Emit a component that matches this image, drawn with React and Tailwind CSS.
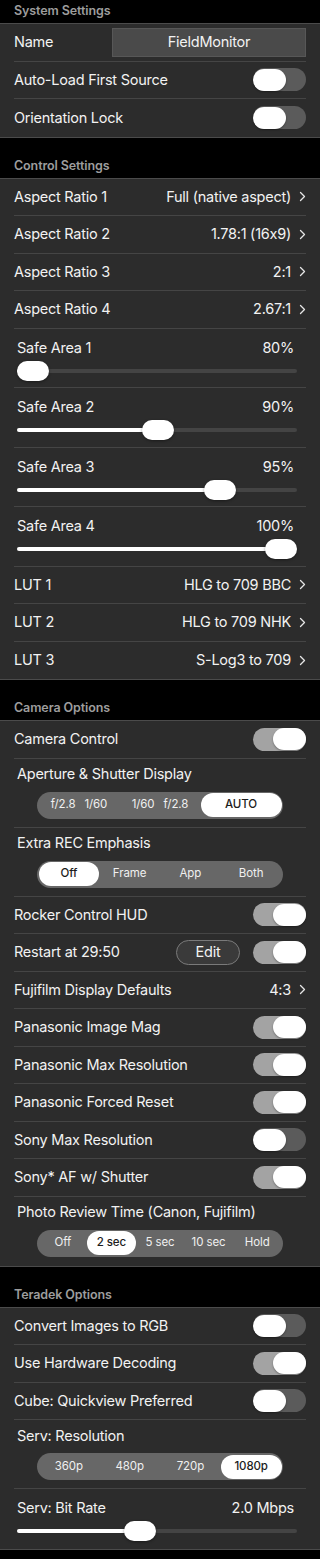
import React from 'react';

const font = { fontFamily: 'Inter, "Noto Sans", sans-serif' };

const Header = ({ title, first }) => (
  <div className={`bg-black px-[14px] ${first ? 'h-[23px]' : 'h-[40px] pt-[17px]'}`}>
    <div className="h-[23px] flex items-center text-[12.5px] font-semibold tracking-[-0.1px] text-[#9d9d9d]">{title}</div>
  </div>
);

const Section = ({ children }) => (
  <div className="bg-[#2c2c2c] border-y border-[#4b4b4b]">{children}</div>
);

const Row = ({ children, last, h = 'h-[37.5px]' }) => (
  <div className="px-[14px]">
    <div className={`${h} ${last ? '' : 'border-b border-[#454545]'}`}>{children}</div>
  </div>
);

const Toggle = ({ on }) => (
  <div className={`w-[53px] h-[23px] rounded-full flex items-center ${on ? 'bg-[#a3a3a3] justify-end' : 'bg-[#5b5b5b] justify-start'}`}>
    <div className="w-[33px] h-[22px] rounded-full bg-white shadow-[0_1px_2px_rgba(0,0,0,0.35)]" />
  </div>
);

const Chevron = () => (
  <svg width="7" height="11" viewBox="0 0 7 11" className="ml-[8px] shrink-0">
    <polyline points="1.5,1.5 5.5,5.5 1.5,9.5" fill="none" stroke="#e6e6e6" strokeWidth="1.3" strokeLinecap="round" strokeLinejoin="round" />
  </svg>
);

const txt = 'text-[14.5px] tracking-[-0.25px] text-[#f2f2f2]';

const ToggleRow = ({ label, on, last, children }) => (
  <Row last={last}>
    <div className="h-full flex items-center justify-between">
      <span className={txt}>{label}</span>
      <div className="flex items-center gap-[13px]">
        {children}
        <Toggle on={on} />
      </div>
    </div>
  </Row>
);

const NavRow = ({ label, value, last }) => (
  <Row last={last}>
    <div className="h-full flex items-center justify-between">
      <span className={txt}>{label}</span>
      <div className="flex items-center">
        <span className={txt}>{value}</span>
        <Chevron />
      </div>
    </div>
  </Row>
);

const SliderRow = ({ label, value, frac, last }) => {
  const thumbLeft = frac * 248;
  return (
    <Row last={last} h="h-[59.5px]">
      <div className="px-[3px] pt-[9px]">
        <div className="flex items-center justify-between pr-[9px] h-[20px]">
          <span className={txt}>{label}</span>
          <span className={txt}>{value}</span>
        </div>
        <div className="relative h-[20px] mt-[3px] w-[280px]">
          <div className="absolute left-0 right-0 top-[8px] h-[4px] rounded-full bg-[#444444]" />
          <div className="absolute left-0 top-[8px] h-[4px] rounded-full bg-white" style={{ width: thumbLeft + 16 }} />
          <div className="absolute top-0 w-[32px] h-[20px] rounded-full bg-white shadow-[0_1px_3px_rgba(0,0,0,0.4)]" style={{ left: thumbLeft }} />
        </div>
      </div>
    </Row>
  );
};

const SegRow = ({ label, options, selected, last }) => (
  <Row last={last} h="h-[69px]">
    <div className="px-[3px] pt-[5px]">
      <div className={`h-[21px] flex items-center ${txt}`}>{label}</div>
      <div className="mt-[7px] ml-[20px] w-[246px] h-[27px] rounded-full bg-[#676767] flex items-center p-[1.5px]">
        {options.map((o, i) => (
          <div
            key={i}
            className={`flex-1 h-full rounded-full flex items-center justify-center text-[11.5px] tracking-[-0.1px] ${i === selected ? 'bg-white text-[#1c1c1c] font-medium' : 'text-[#f0f0f0]'}`}
          >
            {o}
          </div>
        ))}
      </div>
    </div>
  </Row>
);

export default function App() {
  return (
    <div className="w-[320px] min-h-[1559px] bg-black pb-[11px] [font-feature-settings:'calt'_0]" style={font}>
      <Header title="System Settings" first />
      <Section>
        <Row>
          <div className="h-full flex items-center justify-between">
            <span className={txt}>Name</span>
            <div className={`w-[194px] h-[29px] bg-[#4a4a4a] border border-[#575757] flex items-center justify-center ${txt}`}>
              FieldMonitor
            </div>
          </div>
        </Row>
        <ToggleRow label="Auto-Load First Source" on={false} />
        <ToggleRow label="Orientation Lock" on={false} last />
      </Section>

      <Header title="Control Settings" />
      <Section>
        <NavRow label="Aspect Ratio 1" value="Full (native aspect)" />
        <NavRow label="Aspect Ratio 2" value="1.78:1 (16x9)" />
        <NavRow label="Aspect Ratio 3" value="2:1" />
        <NavRow label="Aspect Ratio 4" value="2.67:1" />
        <SliderRow label="Safe Area 1" value="80%" frac={0} />
        <SliderRow label="Safe Area 2" value="90%" frac={0.504} />
        <SliderRow label="Safe Area 3" value="95%" frac={0.754} />
        <SliderRow label="Safe Area 4" value="100%" frac={1} />
        <NavRow label="LUT 1" value="HLG to 709 BBC" />
        <NavRow label="LUT 2" value="HLG to 709 NHK" />
        <NavRow label="LUT 3" value="S-Log3 to 709" last />
      </Section>

      <Header title="Camera Options" />
      <Section>
        <ToggleRow label="Camera Control" on />
        <SegRow
          label="Aperture & Shutter Display"
          options={[
            <span key="a" className="flex gap-[9px]"><span>f/2.8</span><span>1/60</span></span>,
            <span key="b" className="flex gap-[9px]"><span>1/60</span><span>f/2.8</span></span>,
            'AUTO',
          ]}
          selected={2}
        />
        <SegRow label="Extra REC Emphasis" options={['Off', 'Frame', 'App', 'Both']} selected={0} />
        <ToggleRow label="Rocker Control HUD" on />
        <ToggleRow label="Restart at 29:50" on>
          <div className={`w-[64px] h-[25px] rounded-full border border-[#7a7a7a] bg-[#3a3a3a] flex items-center justify-center ${txt}`}>
            Edit
          </div>
        </ToggleRow>
        <NavRow label="Fujifilm Display Defaults" value="4:3" />
        <ToggleRow label="Panasonic Image Mag" on />
        <ToggleRow label="Panasonic Max Resolution" on />
        <ToggleRow label="Panasonic Forced Reset" on />
        <ToggleRow label="Sony Max Resolution" on={false} />
        <ToggleRow label="Sony* AF w/ Shutter" on />
        <SegRow
          label="Photo Review Time (Canon, Fujifilm)"
          options={['Off', '2 sec', '5 sec', '10 sec', 'Hold']}
          selected={1}
          last
        />
      </Section>

      <Header title="Teradek Options" />
      <Section>
        <ToggleRow label="Convert Images to RGB" on={false} />
        <ToggleRow label="Use Hardware Decoding" on />
        <ToggleRow label="Cube: Quickview Preferred" on={false} />
        <SegRow label="Serv: Resolution" options={['360p', '480p', '720p', '1080p']} selected={3} />
        <SliderRow label="Serv: Bit Rate" value="2.0 Mbps" frac={0.43} last />
      </Section>
    </div>
  );
}
